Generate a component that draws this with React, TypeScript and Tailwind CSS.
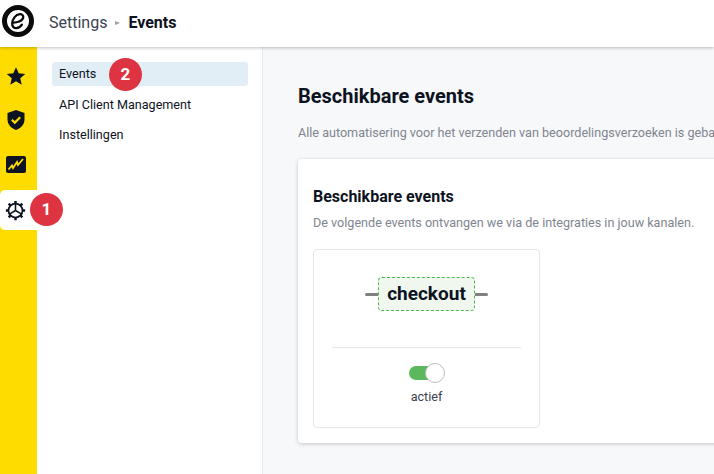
import React from 'react';

const railIcon = 'flex h-[30px] w-full items-center justify-center pr-[6px]';

const App: React.FC = () => {
  return (
    <div className="relative flex h-[474px] w-[714px] flex-col overflow-hidden bg-[#f7f8fa] font-['Roboto',sans-serif] text-[#0d1321]">
      {/* Top bar */}
      <header className="relative z-20 flex h-[47px] shrink-0 items-center bg-white pl-[2px] shadow-[0_1px_3px_rgba(0,0,0,0.25)]">
        <svg width="32" height="32" viewBox="0 0 32 32" className="mt-[-5px]">
          <circle cx="16" cy="16" r="13.500" fill="#fff" stroke="#0b0b0b" strokeWidth="5" />
          <path
            d="M10.500 17.500c4.300.3 10-1.400 10.700-5 .4-2.100-1.300-3.500-3.400-3.300-4.300.5-7.500 5-7.600 9.200-.1 3.100 1.600 4.800 4 4.700 2.400-.1 4.300-1.500 5.700-3.500"
            fill="none"
            stroke="#0b0b0b"
            strokeWidth="2.300"
            strokeLinecap="round"
          />
        </svg>
        <div className="ml-[15px] mb-[2px] flex items-center text-[16px]">
          <span className="text-[#3a4150]">Settings</span>
          <span className="mx-[8px] h-0 w-0 border-y-[2px] border-l-[5px] border-y-transparent border-l-[#9aa0a8]" />
          <span className="font-bold">Events</span>
        </div>
      </header>

      <div className="flex min-h-0 flex-1">
        {/* Yellow rail */}
        <nav className="flex w-[37px] shrink-0 flex-col items-center bg-[#ffdc00] pt-[14px]">
          <div className={railIcon}>
            <svg width="20" height="20" viewBox="0 0 24 24">
              <path d="M12 1.500l3.200 7.300 7.900.7-6 5.200 1.800 7.800L12 18.400l-6.900 4.100 1.800-7.800-6-5.200 7.900-.7z" fill="#0d1321" />
            </svg>
          </div>
          <div className={`${railIcon} mt-[14px]`}>
            <svg width="18" height="20" viewBox="0 0 18 20">
              <path d="M9 0l8.500 3v6.500c0 5-3.600 8.800-8.500 10.500C4.100 18.300.5 14.500.5 9.500V3z" fill="#0d1321" />
              <path d="M4.800 9.800l3 2.800 5.400-5.400" fill="none" stroke="#ffdc00" strokeWidth="2.200" />
            </svg>
          </div>
          <div className={`${railIcon} mt-[14px]`}>
            <svg width="20" height="17" viewBox="0 0 20 17">
              <rect width="20" height="17" rx="2" fill="#0d1321" />
              <path d="M2.500 13.500l3.500-4 1 2.500 4-6 1 3 5-6" fill="none" stroke="#ffdc00" strokeWidth="1.800" />
            </svg>
          </div>
          <div className="mt-[11px] flex h-[40px] w-full items-center justify-center rounded-l-[5px] bg-white pr-[6px]">
            <svg width="21" height="21" viewBox="0 0 24 24" fill="none" stroke="#0d1321">
              <circle cx="12" cy="12" r="8" strokeWidth="2" />
              <path d="M12 12V4.500M12 12l6.500 3.800M12 12l-6.500 3.800" strokeWidth="1.800" />
              <path
                d="M12 1v3M12 20v3M1 12h3M20 12h3M4.200 4.200l2.100 2.100M17.700 17.700l2.100 2.100M4.200 19.800l2.100-2.100M17.700 6.300l2.100-2.100"
                strokeWidth="2.800"
              />
            </svg>
          </div>
        </nav>

        {/* Sub navigation */}
        <aside className="w-[226px] shrink-0 border-r border-[#e6e8eb] bg-white pr-[14px] pl-[15px] pt-[15px] text-[12.6px]">
          <div className="flex h-[24px] items-center rounded-[3px] bg-[#e2eef5] pl-[7px]">Events</div>
          <div className="mt-[7px] flex h-[24px] items-center pl-[7px]">API Client Management</div>
          <div className="mt-[6px] flex h-[24px] items-center pl-[7px]">Instellingen</div>
        </aside>

        {/* Main */}
        <main className="min-w-0 flex-1 overflow-hidden pl-[35px] pt-[36px]">
          <h1 className="text-[20px] leading-[26px] font-bold">Beschikbare events</h1>
          <p className="mt-[15px] text-[12.6px] leading-[18px] whitespace-nowrap text-[#80858f]">
            Alle automatisering voor het verzenden van beoordelingsverzoeken is gebaseerd op events.
          </p>
          <section className="mt-[17px] h-[284px] w-[600px] rounded-[4px] bg-white px-[15px] pt-[28px] shadow-[0_1px_4px_rgba(0,0,0,0.2)]">
            <h2 className="text-[16px] leading-[20px] font-bold">Beschikbare events</h2>
            <p className="mt-[8px] text-[12.6px] leading-[16px] text-[#80858f]">
              De volgende events ontvangen we via de integraties in jouw kanalen.
            </p>
            <div className="mt-[18px] flex h-[179px] w-[227px] flex-col items-center rounded-[4px] border border-[#e4e6e9] px-[18px] pt-[27px]">
              <div className="flex items-center">
                <span className="h-[3px] w-[13px] rounded-l-full bg-[#808080]" />
                <span className="flex h-[34px] items-center rounded-[4px] border border-dashed border-[#4cb84c] bg-[#eff7ee] px-[8px] text-[19px] font-bold">
                  checkout
                </span>
                <span className="h-[3px] w-[13px] rounded-r-full bg-[#808080]" />
              </div>
              <hr className="mt-[36px] w-full border-[#e4e6e9]" />
              <div className="relative mt-[18px] mr-[3px] h-[14px] w-[33px] rounded-full bg-[#5cb85c]">
                <span className="absolute top-[-3px] right-[-3px] h-[20px] w-[20px] rounded-full border border-[#bdbdbd] bg-white" />
              </div>
              <span className="mt-[9px] text-[12.6px] leading-[16px] text-[#3a4150]">actief</span>
            </div>
          </section>
        </main>
      </div>

      {/* Step badges */}
      <span className="absolute top-[193px] left-[30px] z-30 flex h-[33px] w-[33px] items-center justify-center rounded-full bg-[#de3341] text-[17px] font-bold text-white">
        1
      </span>
      <span className="absolute top-[58px] left-[109px] z-30 flex h-[33px] w-[33px] items-center justify-center rounded-full bg-[#de3341] text-[17px] font-bold text-white">
        2
      </span>
    </div>
  );
};

export default App;
